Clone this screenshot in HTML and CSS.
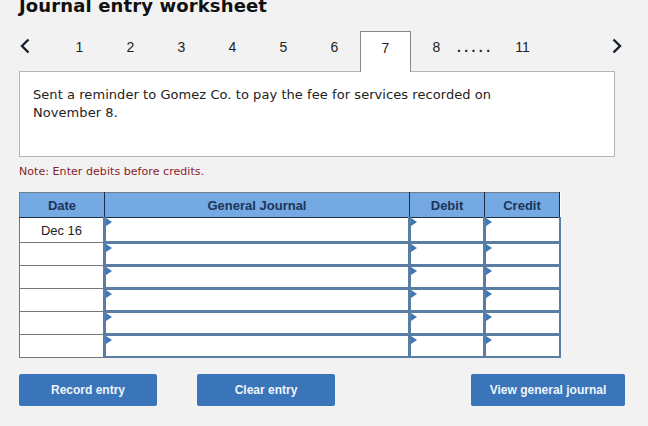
FILE: index.html
```html
<!DOCTYPE html>
<html lang="en">
<head>
    <meta charset="UTF-8">
    <meta name="viewport" content="width=device-width, initial-scale=1.0">
    <title>Journal entry worksheet</title>
    <link rel="stylesheet" href="styles.css">
</head>
<body>

    <h1 class="title">Journal entry worksheet</h1>

    <!-- Question tabs -->
    <div class="tabs">
        <button class="arrow">
            <svg width="12" height="16" viewBox="0 0 12 16"><path d="M9.5 1.5 L3 8 L9.5 14.5" fill="none" stroke="#14202e" stroke-width="2.4"/></svg>
        </button>
        <div class="tab-list">
            <div class="tab">1</div>
            <div class="tab">2</div>
            <div class="tab">3</div>
            <div class="tab">4</div>
            <div class="tab">5</div>
            <div class="tab">6</div>
            <div class="tab active">7</div>
            <div class="tab">8</div>
            <div class="dots">.....</div>
            <div class="tab last">11</div>
        </div>
        <button class="arrow next">
            <svg width="12" height="16" viewBox="0 0 12 16"><path d="M2.5 1.5 L9 8 L2.5 14.5" fill="none" stroke="#14202e" stroke-width="2.4"/></svg>
        </button>
    </div>

    <div class="card">Sent a reminder to Gomez Co. to pay the fee for services recorded on November 8.</div>

    <p class="note">Note: Enter debits before credits.</p>

    <table class="journal">
        <tr>
            <th class="col-date">Date</th>
            <th class="col-text">General Journal</th>
            <th class="col-num">Debit</th>
            <th class="col-num">Credit</th>
        </tr>
        <tr>
            <td class="date">Dec 16</td>
            <td class="entry"></td>
            <td class="entry"></td>
            <td class="entry"></td>
        </tr>
        <tr>
            <td class="date"></td>
            <td class="entry"></td>
            <td class="entry"></td>
            <td class="entry"></td>
        </tr>
        <tr>
            <td class="date"></td>
            <td class="entry"></td>
            <td class="entry"></td>
            <td class="entry"></td>
        </tr>
        <tr>
            <td class="date"></td>
            <td class="entry"></td>
            <td class="entry"></td>
            <td class="entry"></td>
        </tr>
        <tr>
            <td class="date"></td>
            <td class="entry"></td>
            <td class="entry"></td>
            <td class="entry"></td>
        </tr>
        <tr>
            <td class="date"></td>
            <td class="entry"></td>
            <td class="entry"></td>
            <td class="entry"></td>
        </tr>
    </table>

    <div class="actions">
        <button class="btn">Record entry</button>
        <button class="btn clear">Clear entry</button>
        <button class="btn view">View general journal</button>
    </div>

</body>
</html>
```

FILE: styles.css
```css
html, body { height: 100%; }
body { margin: 0; padding: 0 23px 0 19px; background: #f2f2f2; font-family: "Liberation Sans", Arial, sans-serif; color: #222; overflow: hidden; box-sizing: border-box; }
.title { margin: -4px 0 0; font-family: "DejaVu Sans", Verdana, sans-serif; font-size: 18px; line-height: 20px; font-weight: bold; letter-spacing: 0.13px; color: #111; }
.tabs { display: flex; align-items: flex-start; height: 41px; margin-top: 15px; position: relative; z-index: 1; }
.arrow { width: 16px; height: 30px; padding: 0; border: none; background: none; display: flex; align-items: center; }
.next { margin-left: auto; margin-right: -2px; }
.tab-list { display: flex; margin-left: 19px; }
.tab { width: 51px; height: 41px; box-sizing: border-box; padding-top: 8px; font-size: 14px; line-height: 16px; text-align: center; color: #222; }
.tab.active { background: white; border: 1px solid #888; border-bottom: none; }
.dots { width: 39px; padding-top: 8px; margin-left: -5px; font-size: 14px; line-height: 16px; letter-spacing: 3.4px; font-weight: bold; font-family: "Liberation Sans", sans-serif; color: #222; }
.tab.last { margin-left: 1px; }
.card { width: 596px; height: 86px; box-sizing: border-box; margin-top: -1px; padding: 14px 100px 0 13px; background: white; border: 1px solid #b5b5b5; font-family: "DejaVu Sans", Verdana, sans-serif; font-size: 13px; line-height: 18px; letter-spacing: 0.06px; color: #222; }
.note { margin: 8px 0 0; font-family: "DejaVu Sans", Verdana, sans-serif; font-size: 11px; line-height: 14px; letter-spacing: 0.06px; color: #8b1a2b; }
.journal { margin-top: 13px; width: 539px; border-collapse: collapse; table-layout: fixed; background: white; }
.journal th { height: 24px; padding: 0; background: #75a9e3; border: 1px solid #1c2f45; border-top-color: #6f7f8f; border-left-color: #6f7f8f; font-size: 13px; font-weight: bold; color: #1c3557; text-align: center; }
.col-date { width: 84px; }
.col-text { width: 304px; }
.col-num { width: 74px; }
.journal td { height: 20px; padding: 0; }
.journal tr:nth-child(2) td { height: 23px; }
.date { border: 1px solid #777; font-size: 13px; text-align: center; color: #222; }
.entry { border-style: solid; border-color: #5a7da3; border-width: 3px; position: relative; }
.journal tr:nth-child(2) .entry { border-top-width: 1px; }
.entry:last-child { border-right-width: 2px; }
.journal tr:last-child .entry { border-bottom-width: 2px; }
.entry::before { content: ""; position: absolute; left: 0; top: 0; border-left: 6px solid #3f78b9; border-top: 4px solid transparent; border-bottom: 4px solid transparent; }
.actions { display: flex; margin-top: 16px; }
.btn { width: 138px; height: 32px; padding: 0; border: none; border-radius: 2px; background: #3a75b9; color: #eef4fb; font-family: "Liberation Sans", Arial, sans-serif; font-size: 12px; font-weight: bold; }
.clear { margin-left: 40px; }
.view { width: 154px; margin-left: 136px; }
```
